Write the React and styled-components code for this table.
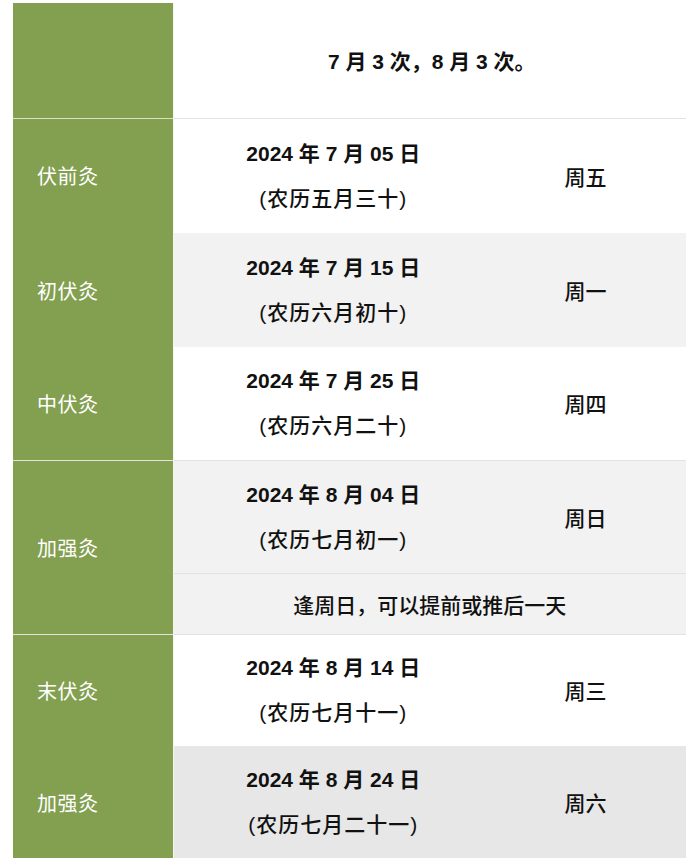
import React from "react";
import styled, { createGlobalStyle } from "styled-components";

const GlobalStyle = createGlobalStyle`
  html, body {
    margin: 0;
    padding: 0;
    background: #ffffff;
  }
  body {
    font-family: "Liberation Sans", "Noto Sans CJK SC", sans-serif;
    color: #111111;
  }
`;

const Page = styled.div`
  padding: 3px 0 0 13px;
  width: 673px;
`;

const Table = styled.table`
  width: 673px;
  border-collapse: collapse;
  table-layout: fixed;
  font-size: 21px;
`;

const Col = styled.col`
  width: ${(p) => p.$w}px;
`;

const Row = styled.tr`
  height: ${(p) => p.$h}px;
  background: ${(p) => p.$bg || "#ffffff"};
  border-top: ${(p) => (p.$line ? "1px solid #e2e2e2" : "none")};
`;

const Label = styled.td`
  background: #83a051;
  color: #ffffff;
  padding: 0 0 0 24px;
  vertical-align: middle;
  border-right: 1px solid #f4f6ef;
  border-top: ${(p) => (p.$split ? "1px solid #d9e2c8" : "none")};
  font-size: 20px;
  font-weight: 400;
  letter-spacing: 0.5px;
`;

const DateCell = styled.td`
  text-align: center;
  vertical-align: middle;
  padding: 0;
`;

const DateLine = styled.div`
  line-height: 45px;
  font-weight: ${(p) => (p.$bold ? 700 : 500)};
  letter-spacing: ${(p) => (p.$bold ? "0" : "1px")};
  white-space: pre;
`;

const DayCell = styled.td`
  text-align: center;
  vertical-align: middle;
  font-weight: 500;
  padding: 0 8px 0 0;
`;

const WideCell = styled.td`
  text-align: center;
  vertical-align: middle;
  font-weight: ${(p) => (p.$bold ? 700 : 500)};
  white-space: pre;
  padding: ${(p) => p.$pad || "0"};
`;

const rows = [
  { label: "伏前灸", date: "2024 年 7 月 05 日", lunar: "(农历五月三十)", day: "周五", h: 115, bg: "#ffffff", line: true },
  { label: "初伏灸", date: "2024 年 7 月 15 日", lunar: "(农历六月初十)", day: "周一", h: 114, bg: "#f2f2f2" },
  { label: "中伏灸", date: "2024 年 7 月 25 日", lunar: "(农历六月二十)", day: "周四", h: 113, bg: "#ffffff" },
];

export default function App() {
  return (
    <>
      <GlobalStyle />
      <Page>
        <Table>
          <colgroup>
            <Col $w={160} />
            <Col $w={320} />
            <Col $w={193} />
          </colgroup>
          <tbody>
            <Row $h={115}>
              <Label />
              <WideCell colSpan={2} $bold $pad="0 0 0 4px">
                7 月 3 次，8 月 3 次。
              </WideCell>
            </Row>
            {rows.map((r, i) => (
              <Row key={r.label} $h={r.h} $bg={r.bg} $line={r.line}>
                <Label $split={i === 0}>{r.label}</Label>
                <DateCell>
                  <DateLine $bold>{r.date}</DateLine>
                  <DateLine>{r.lunar}</DateLine>
                </DateCell>
                <DayCell>{r.day}</DayCell>
              </Row>
            ))}
            <Row $h={113} $bg="#f2f2f2" $line>
              <Label rowSpan={2}>加强灸</Label>
              <DateCell>
                <DateLine $bold>2024 年 8 月 04 日</DateLine>
                <DateLine>(农历七月初一)</DateLine>
              </DateCell>
              <DayCell>周日</DayCell>
            </Row>
            <Row $h={61} $bg="#f2f2f2" $line>
              <WideCell colSpan={2}>逢周日，可以提前或推后一天</WideCell>
            </Row>
            <Row $h={112} $bg="#ffffff" $line>
              <Label>末伏灸</Label>
              <DateCell>
                <DateLine $bold>2024 年 8 月 14 日</DateLine>
                <DateLine>(农历七月十一)</DateLine>
              </DateCell>
              <DayCell>周三</DayCell>
            </Row>
            <Row $h={112} $bg="#e7e7e7">
              <Label>加强灸</Label>
              <DateCell>
                <DateLine $bold>2024 年 8 月 24 日</DateLine>
                <DateLine>(农历七月二十一)</DateLine>
              </DateCell>
              <DayCell>周六</DayCell>
            </Row>
          </tbody>
        </Table>
      </Page>
    </>
  );
}
